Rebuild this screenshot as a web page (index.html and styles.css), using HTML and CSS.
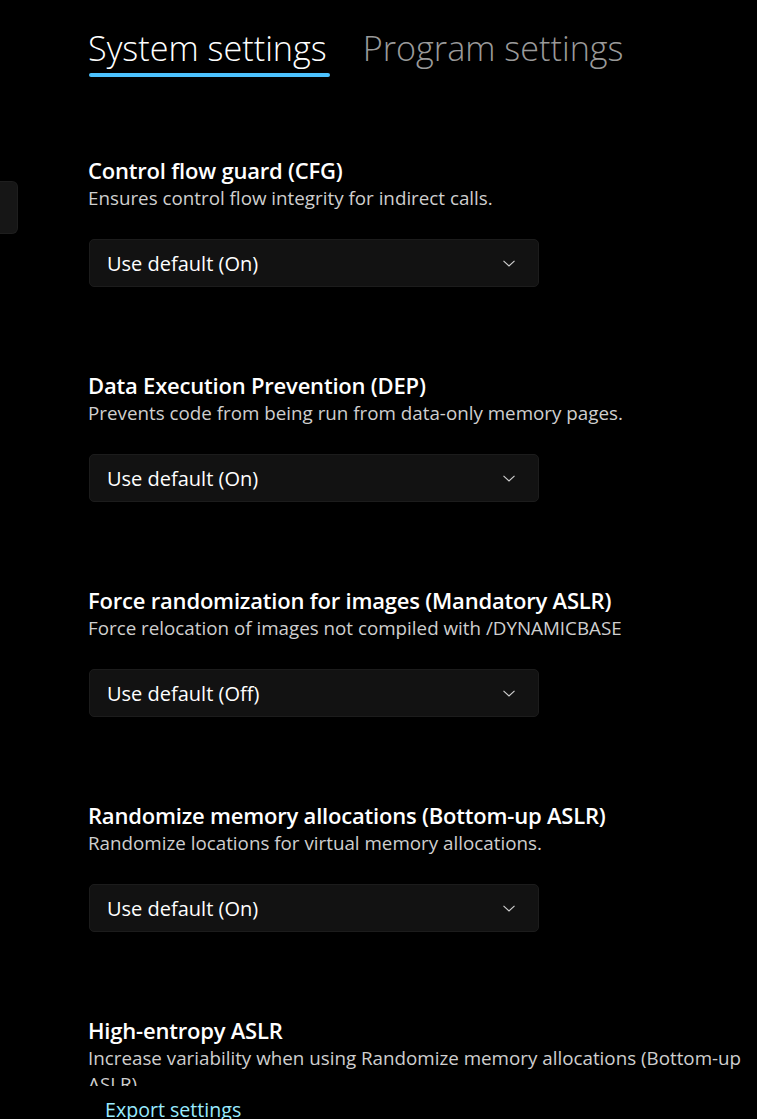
FILE: index.html
```html
<!DOCTYPE html>
<html lang="en">
<head>
<meta charset="utf-8">
<title>Exploit protection</title>
<link rel="stylesheet" href="styles.css">
</head>
<body>
<div class="page">
  <aside class="sidebar"><div class="nav-stub"></div></aside>
  <main class="main">
    <nav class="tabs">
      <div class="tab active">System settings<span class="underline"></span></div>
      <div class="tab">Program settings</div>
    </nav>
    <div class="scroller">
      <section class="setting">
        <h2 class="title">Control flow guard (CFG)</h2>
        <p class="desc">Ensures control flow integrity for indirect calls.</p>
        <div class="select"><span>Use default (On)</span><svg class="chev" width="12" height="7" viewBox="0 0 12 7"><path d="M0.5 0.8 L6 6 L11.5 0.8" fill="none" stroke="#d0d0d0" stroke-width="1.1"/></svg></div>
      </section>
      <section class="setting">
        <h2 class="title">Data Execution Prevention (DEP)</h2>
        <p class="desc">Prevents code from being run from data-only memory pages.</p>
        <div class="select"><span>Use default (On)</span><svg class="chev" width="12" height="7" viewBox="0 0 12 7"><path d="M0.5 0.8 L6 6 L11.5 0.8" fill="none" stroke="#d0d0d0" stroke-width="1.1"/></svg></div>
      </section>
      <section class="setting">
        <h2 class="title">Force randomization for images (Mandatory ASLR)</h2>
        <p class="desc">Force relocation of images not compiled with /DYNAMICBASE</p>
        <div class="select"><span>Use default (Off)</span><svg class="chev" width="12" height="7" viewBox="0 0 12 7"><path d="M0.5 0.8 L6 6 L11.5 0.8" fill="none" stroke="#d0d0d0" stroke-width="1.1"/></svg></div>
      </section>
      <section class="setting">
        <h2 class="title">Randomize memory allocations (Bottom-up ASLR)</h2>
        <p class="desc">Randomize locations for virtual memory allocations.</p>
        <div class="select"><span>Use default (On)</span><svg class="chev" width="12" height="7" viewBox="0 0 12 7"><path d="M0.5 0.8 L6 6 L11.5 0.8" fill="none" stroke="#d0d0d0" stroke-width="1.1"/></svg></div>
      </section>
      <section class="setting">
        <h2 class="title">High-entropy ASLR</h2>
        <p class="desc">Increase variability when using Randomize memory allocations (Bottom-up ASLR)</p>
        <div class="select"><span>Use default (On)</span><svg class="chev" width="12" height="7" viewBox="0 0 12 7"><path d="M0.5 0.8 L6 6 L11.5 0.8" fill="none" stroke="#d0d0d0" stroke-width="1.1"/></svg></div>
      </section>
    </div>
    <div class="footer"><a class="link" href="#">Export settings</a></div>
  </main>
</div>
</body>
</html>
```

FILE: styles.css
```css
html, body {
  margin: 0;
  padding: 0;
  background: #000;
  height: 100%;
  overflow: hidden;
}
body {
  font-family: "Open Sans", "Noto Sans", sans-serif;
  color: #fff;
}
.page {
  display: flex;
  height: 1119px;
}
.sidebar {
  width: 18px;
  flex: none;
}
.nav-stub {
  margin-top: 181px;
  height: 53px;
  width: 18px;
  background: #161616;
  border: 1px solid #1e1e1e;
  border-left: none;
  border-radius: 0 6px 6px 0;
  box-sizing: border-box;
}
.main {
  margin-left: 70px;
  width: 669px;
  display: flex;
  flex-direction: column;
}
.tabs {
  display: flex;
  gap: 36px;
  padding-top: 26px;
  height: 155px;
  box-sizing: border-box;
  flex: none;
}
.tab {
  position: relative;
  font-size: 34.2px;
  font-weight: 300;
  line-height: 44px;
  color: #9a9a9a;
  white-space: nowrap;
}
.tab.active {
  color: #fff;
}
.underline {
  position: absolute;
  left: 1px;
  right: -3px;
  top: 47px;
  height: 4px;
  border-radius: 2px;
  background: #4cc2ff;
}
.scroller {
  height: 931px;
  overflow: hidden;
  flex: none;
}
.setting {
  margin-bottom: 83px;
}
.title {
  margin: 0;
  font-size: 22px;
  font-weight: 600;
  line-height: 30px;
  letter-spacing: -0.2px;
}
.desc {
  margin: 0;
  font-size: 18.8px;
  line-height: 26px;
  color: #cfcfcf;
}
.select {
  margin-top: 28px;
  margin-left: 1px;
  width: 450px;
  height: 48px;
  box-sizing: border-box;
  background: #121212;
  border: 1px solid #1c1c1c;
  border-radius: 5px;
  display: flex;
  align-items: center;
  justify-content: space-between;
  padding: 0 23px 0 17px;
  font-size: 20px;
}
.chev {
  display: block;
}
.footer {
  padding-left: 17px;
  padding-top: 10px;
  line-height: 27px;
}
.link {
  color: #99ebff;
  font-size: 19.6px;
  text-decoration: none;
}
```
